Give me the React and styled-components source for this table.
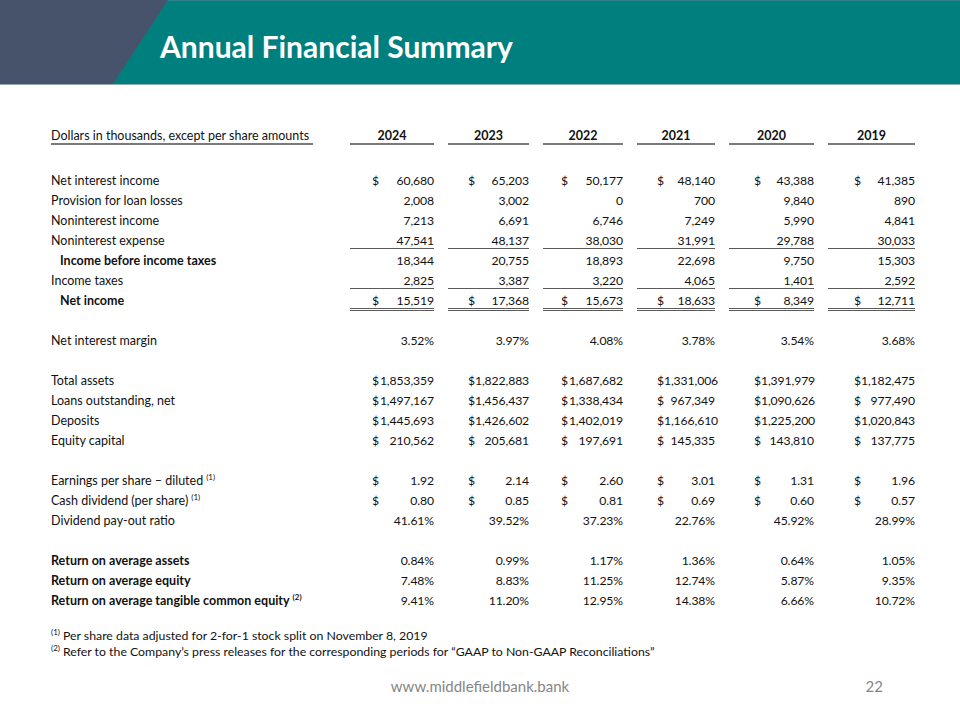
import React from "react";
import styled, { createGlobalStyle } from "styled-components";

const GlobalStyle = createGlobalStyle`
  html, body { margin: 0; padding: 0; background: #ffffff; }
  body { font-family: Lato, "Open Sans", Arial, sans-serif; color: #111111; }
`;

const COLS = [
  { w: 84, d: 22 },
  { w: 81, d: 20 },
  { w: 80, d: 18 },
  { w: 78, d: 20 },
  { w: 85, d: 25 },
  { w: 87, d: 26 },
];
const TEMPLATE = `285px ${COLS.map((c) => c.w + "px").join(" ")}`;
const YEARS = ["2024", "2023", "2022", "2021", "2020", "2019"];

const SECTIONS = [
  [
    { label: "Net interest income", dollar: true, vals: ["60,680", "65,203", "50,177", "48,140", "43,388", "41,385"] },
    { label: "Provision for loan losses", vals: ["2,008", "3,002", "0", "700", "9,840", "890"] },
    { label: "Noninterest income", vals: ["7,213", "6,691", "6,746", "7,249", "5,990", "4,841"] },
    { label: "Noninterest expense", rule: "single", vals: ["47,541", "48,137", "38,030", "31,991", "29,788", "30,033"] },
    { label: "Income before income taxes", bold: true, indent: true, vals: ["18,344", "20,755", "18,893", "22,698", "9,750", "15,303"] },
    { label: "Income taxes", rule: "single", vals: ["2,825", "3,387", "3,220", "4,065", "1,401", "2,592"] },
    { label: "Net income", bold: true, indent: true, dollar: true, rule: "double", vals: ["15,519", "17,368", "15,673", "18,633", "8,349", "12,711"] },
  ],
  [
    { label: "Net interest margin", vals: ["3.52%", "3.97%", "4.08%", "3.78%", "3.54%", "3.68%"] },
  ],
  [
    { label: "Total assets", dollar: true, vals: ["1,853,359", "1,822,883", "1,687,682", "1,331,006", "1,391,979", "1,182,475"] },
    { label: "Loans outstanding, net", dollar: true, vals: ["1,497,167", "1,456,437", "1,338,434", "967,349", "1,090,626", "977,490"] },
    { label: "Deposits", dollar: true, vals: ["1,445,693", "1,426,602", "1,402,019", "1,166,610", "1,225,200", "1,020,843"] },
    { label: "Equity capital", dollar: true, vals: ["210,562", "205,681", "197,691", "145,335", "143,810", "137,775"] },
  ],
  [
    { label: "Earnings per share \u2013 diluted", note: "(1)", dollar: true, vals: ["1.92", "2.14", "2.60", "3.01", "1.31", "1.96"] },
    { label: "Cash dividend (per share)", note: "(1)", dollar: true, vals: ["0.80", "0.85", "0.81", "0.69", "0.60", "0.57"] },
    { label: "Dividend pay-out ratio", vals: ["41.61%", "39.52%", "37.23%", "22.76%", "45.92%", "28.99%"] },
  ],
  [
    { label: "Return on average assets", bold: true, vals: ["0.84%", "0.99%", "1.17%", "1.36%", "0.64%", "1.05%"] },
    { label: "Return on average equity", bold: true, vals: ["7.48%", "8.83%", "11.25%", "12.74%", "5.87%", "9.35%"] },
    { label: "Return on average tangible common equity", note: "(2)", bold: true, vals: ["9.41%", "11.20%", "12.95%", "14.38%", "6.66%", "10.72%"] },
  ],
];

const Slide = styled.div`
  width: 960px;
  height: 720px;
  display: flex;
  flex-direction: column;
  overflow: hidden;
  background: #ffffff;
`;

const Header = styled.header`
  position: relative;
  height: 85px;
  box-sizing: border-box;
  background: #007f7f;
  border-top: 1px solid #2f7f90;
  border-bottom: 1px solid #8ea9bd;
  display: flex;
  align-items: flex-start;
  padding: 27px 0 0 160px;
  flex-shrink: 0;
  &::before {
    content: "";
    position: absolute;
    inset: -1px 0 0 0;
    background: #47536b;
    clip-path: polygon(0 0, 168px 0, 113px 100%, 0 100%);
  }
`;

const Title = styled.h1`
  position: relative;
  margin: 0;
  font-family: Lato, "Open Sans", Arial, sans-serif;
  font-weight: 700;
  font-size: 30px;
  line-height: 36px;
  color: #ffffff;
`;

const Table = styled.section`
  display: flex;
  flex-direction: column;
  padding: 41px 0 0 51px;
  font-size: 12.5px;
`;

const Row = styled.div`
  display: grid;
  grid-template-columns: ${TEMPLATE};
  column-gap: 14px;
  height: 20px;
  line-height: 20px;
`;

const Spacer = styled.div`
  height: ${(p) => p.$h}px;
`;

const HeadLabel = styled.div`
  white-space: nowrap;
`;

const HeadLabelText = styled.span`
  display: inline-block;
  height: 20px;
  padding-right: 4px;
  background: linear-gradient(#7a7a7a, #7a7a7a) no-repeat 0 17px / 100% 2px;
`;

const YearCell = styled.div`
  text-align: center;
  font-weight: 700;
  background: linear-gradient(#7a7a7a, #7a7a7a) no-repeat 0 17px / 100% 2px;
`;

const Label = styled.div`
  white-space: nowrap;
  font-weight: ${(p) => (p.$bold ? 700 : 400)};
  padding-left: ${(p) => (p.$indent ? 9 : 0)}px;
`;

const Note = styled.sup`
  font-size: 8px;
  line-height: 0;
  vertical-align: 5px;
  margin-left: 3px;
  font-weight: inherit;
`;

const RULES = {
  none: "none",
  single: "linear-gradient(#5a5a5a, #5a5a5a) no-repeat 0 17px / 100% 1px",
  double:
    "linear-gradient(#5a5a5a, #5a5a5a) no-repeat 0 17px / 100% 1px, linear-gradient(#5a5a5a, #5a5a5a) no-repeat 0 19px / 100% 1px",
};

const Value = styled.div`
  display: flex;
  justify-content: ${(p) => (p.$dollar ? "space-between" : "flex-end")};
  padding-left: ${(p) => (p.$dollar ? p.$offset : 0)}px;
  white-space: nowrap;
  font-size: 12.2px;
  letter-spacing: -0.1px;
  background: ${(p) => RULES[p.$rule || "none"]};
`;

const Footnotes = styled.div`
  padding: 17px 0 0 51px;
  font-size: 12.3px;
  line-height: 16px;
`;

const FootnoteLine = styled.div`
  white-space: nowrap;
`;

const FootSup = styled.sup`
  font-size: 8px;
  line-height: 0;
  vertical-align: 5px;
  margin-right: 3px;
`;

const Footer = styled.footer`
  margin-top: auto;
  display: grid;
  grid-template-columns: 1fr auto 1fr;
  align-items: center;
  height: 20px;
  margin-bottom: 24px;
  color: #858585;
  font-size: 15px;
`;

const Url = styled.div`
  grid-column: 2;
`;

const PageNum = styled.div`
  grid-column: 3;
  justify-self: end;
  padding-right: 77px;
`;

function DataRow({ row }) {
  return (
    <Row>
      <Label $bold={row.bold} $indent={row.indent}>
        {row.label}
        {row.note && <Note>{row.note}</Note>}
      </Label>
      {row.vals.map((v, i) => (
        <Value key={i} $dollar={row.dollar} $offset={COLS[i].d} $rule={row.rule}>
          {row.dollar && <span>$</span>}
          <span>{v}</span>
        </Value>
      ))}
    </Row>
  );
}

export default function App() {
  return (
    <>
      <GlobalStyle />
      <Slide>
        <Header>
          <Title>Annual Financial Summary</Title>
        </Header>
        <Table>
          <Row>
            <HeadLabel>
              <HeadLabelText>Dollars in thousands, except per share amounts</HeadLabelText>
            </HeadLabel>
            {YEARS.map((y) => (
              <YearCell key={y}>{y}</YearCell>
            ))}
          </Row>
          {SECTIONS.map((sec, si) => (
            <React.Fragment key={si}>
              <Spacer $h={si === 0 ? 25 : 20} />
              {sec.map((row) => (
                <DataRow key={row.label} row={row} />
              ))}
            </React.Fragment>
          ))}
        </Table>
        <Footnotes>
          <FootnoteLine>
            <FootSup>(1)</FootSup>Per share data adjusted for 2-for-1 stock split on November 8, 2019
          </FootnoteLine>
          <FootnoteLine>
            <FootSup>(2)</FootSup>Refer to the Company’s press releases for the corresponding periods for “GAAP to Non-GAAP Reconciliations”
          </FootnoteLine>
        </Footnotes>
        <Footer>
          <Url>www.middlefieldbank.bank</Url>
          <PageNum>22</PageNum>
        </Footer>
      </Slide>
    </>
  );
}
